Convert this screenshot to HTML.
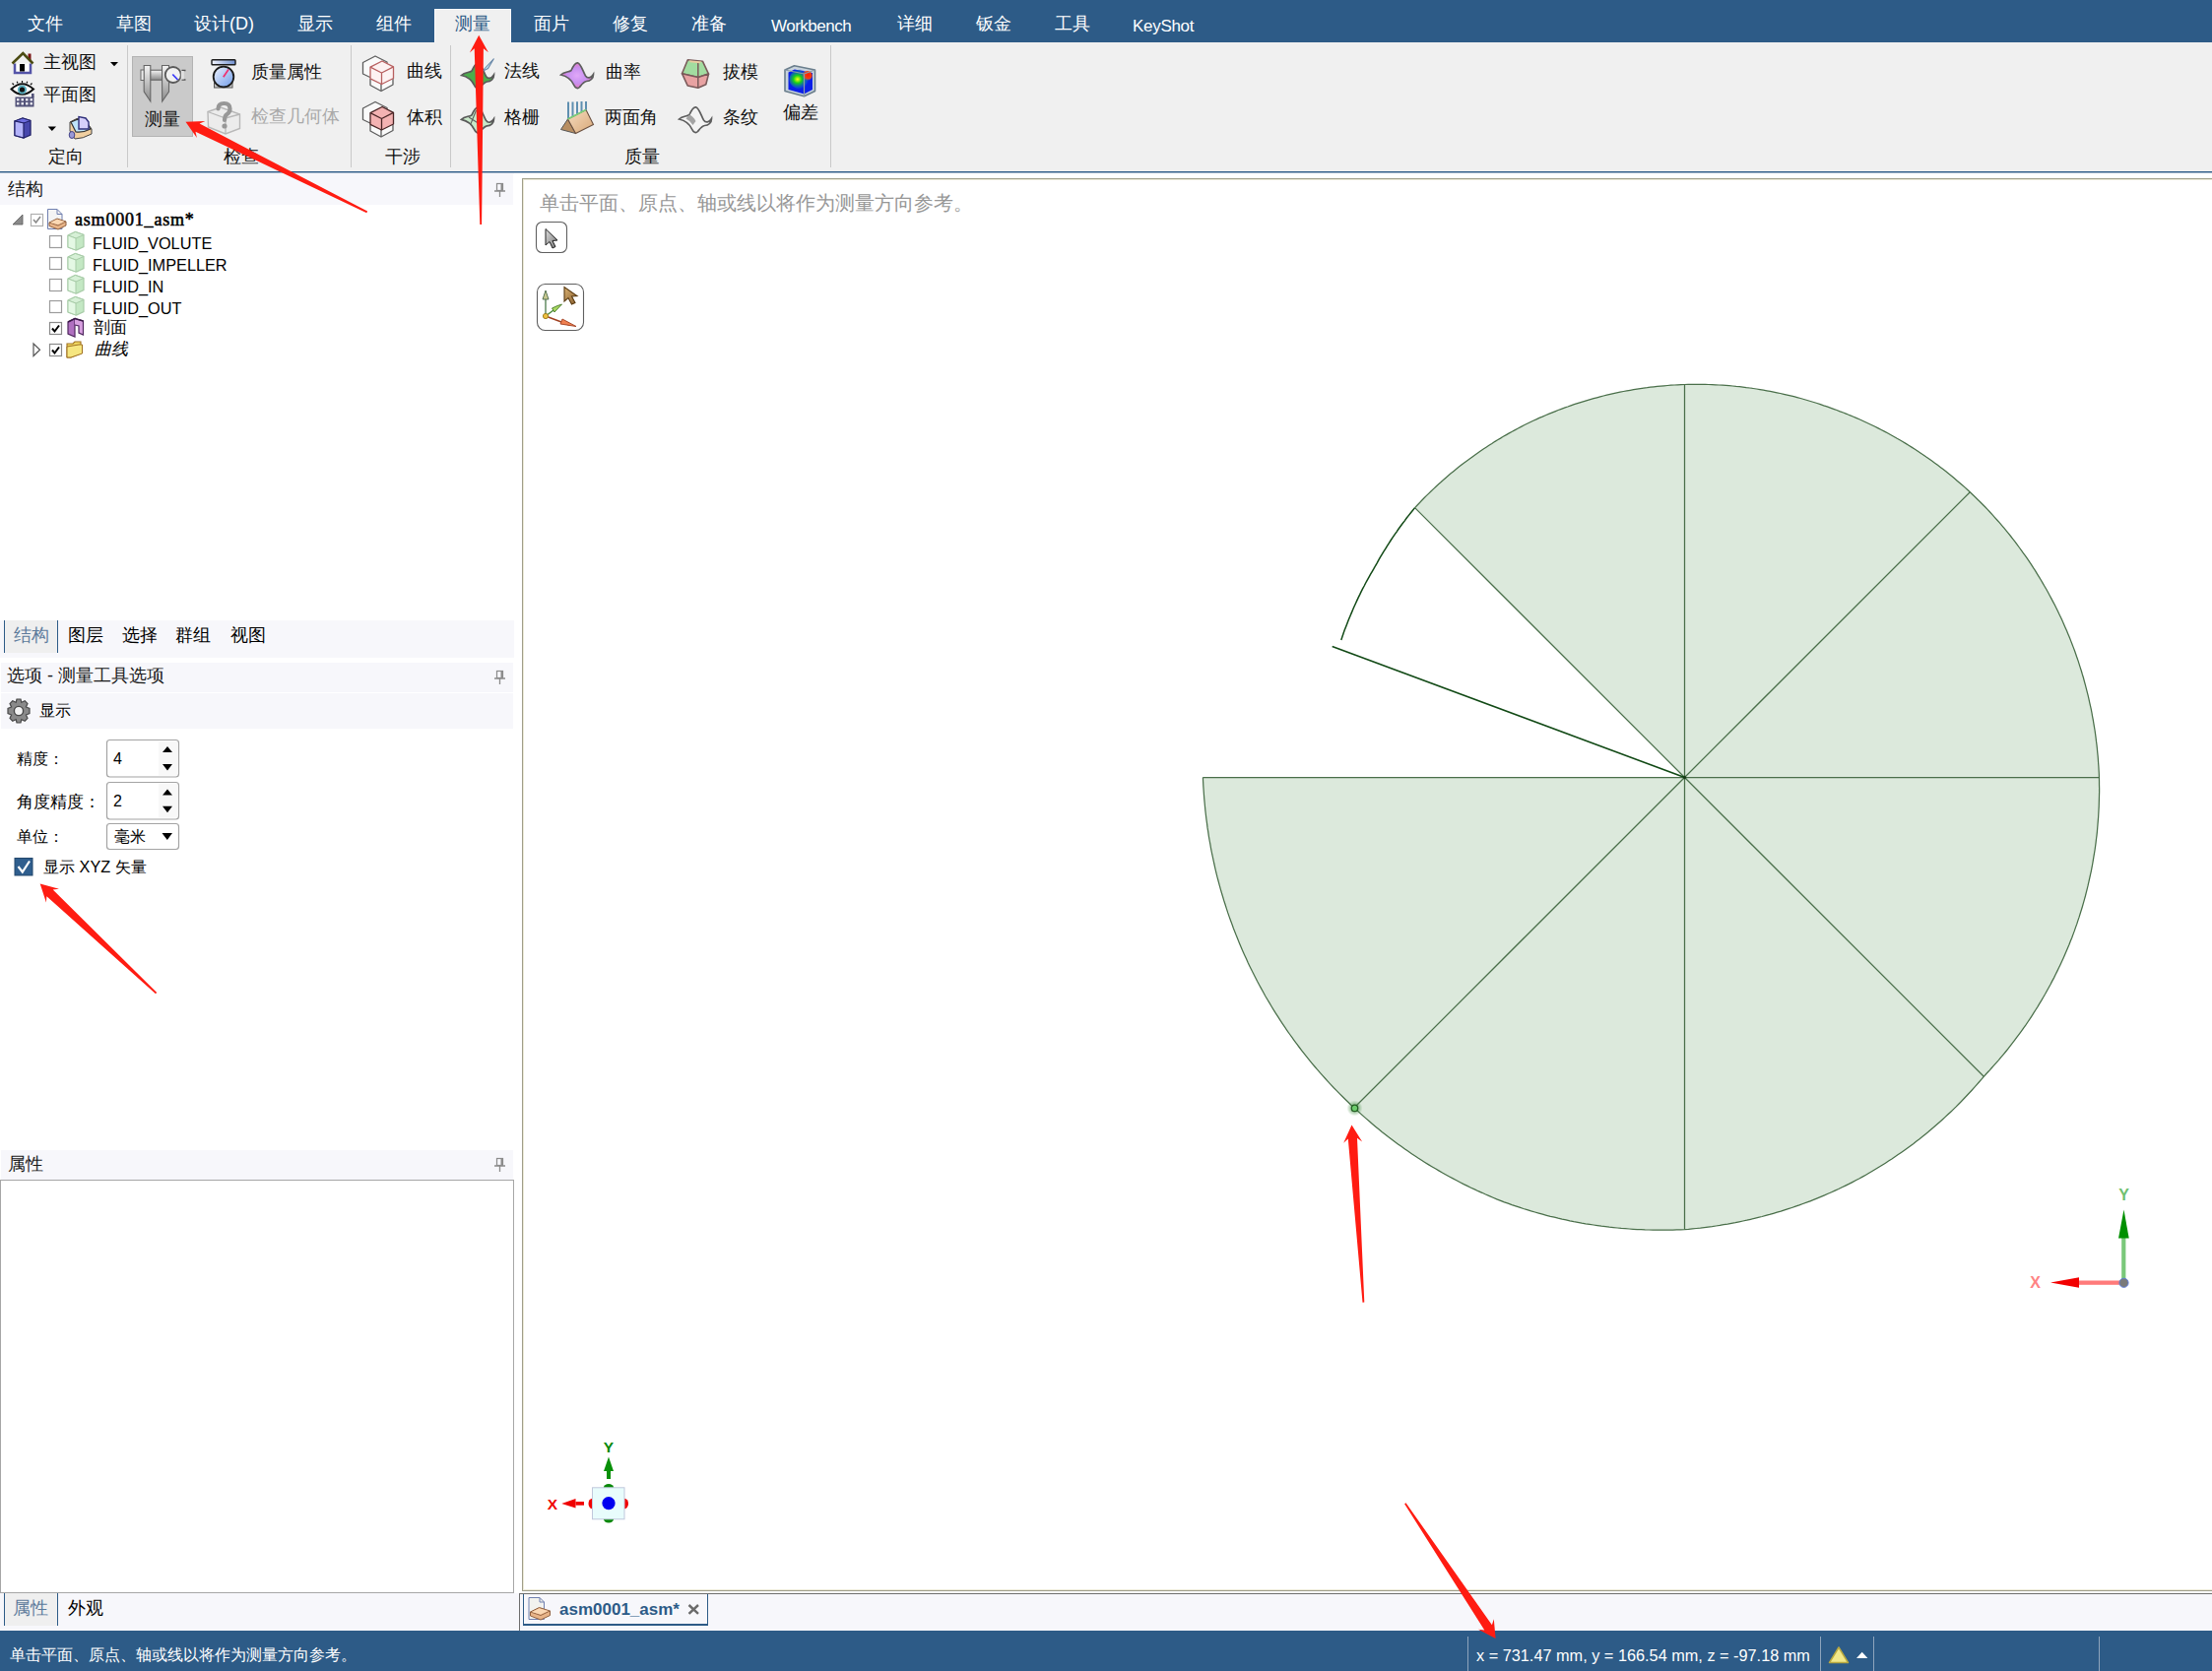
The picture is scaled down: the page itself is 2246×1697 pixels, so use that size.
<!DOCTYPE html>
<html><head><meta charset="utf-8">
<style>
html,body{margin:0;padding:0}
body{width:2246px;height:1697px;position:relative;overflow:hidden;background:#ffffff;font-family:"Liberation Sans",sans-serif;color:#000}
.a{position:absolute}
.t{position:absolute;white-space:nowrap;line-height:1}
.mt{position:absolute;white-space:nowrap;line-height:1;color:#fff;font-size:18px;top:15px}
.rt{position:absolute;white-space:nowrap;line-height:1;font-size:18px;color:#111}
.sep{position:absolute;width:1px;background:#c9c9c9;top:46px;height:124px}
svg{position:absolute;overflow:visible}
</style></head><body>

<!-- ===== MENU BAR ===== -->
<div class="a" style="left:0;top:0;width:2246px;height:43px;background:#2d5b87"></div>
<div class="a" style="left:441px;top:9px;width:76px;height:34px;background:#f0f0f0;border:1px solid #fafafa;border-bottom:0"></div>
<div class="mt" style="left:28px">文件</div>
<div class="mt" style="left:118px">草图</div>
<div class="mt" style="left:197px">设计(D)</div>
<div class="mt" style="left:302px">显示</div>
<div class="mt" style="left:382px">组件</div>
<div class="mt" style="left:462px;color:#2d5b87">测量</div>
<div class="mt" style="left:542px">面片</div>
<div class="mt" style="left:622px">修复</div>
<div class="mt" style="left:702px">准备</div>
<div class="mt" style="left:783px;font-size:17px;top:17.5px;letter-spacing:-0.5px">Workbench</div>
<div class="mt" style="left:911px">详细</div>
<div class="mt" style="left:991px">钣金</div>
<div class="mt" style="left:1071px">工具</div>
<div class="mt" style="left:1150px;font-size:17px;top:17.5px;letter-spacing:-0.3px">KeyShot</div>

<!-- ===== RIBBON ===== -->
<div class="a" style="left:0;top:43px;width:2246px;height:131px;background:#f0f0f0"></div>
<div class="a" style="left:0;top:174px;width:2246px;height:1px;background:#2d5b87"></div><div class="a" style="left:0;top:175px;width:2246px;height:1px;background:#9fb4c8"></div>
<div class="sep" style="left:129px"></div>
<div class="sep" style="left:356px"></div>
<div class="sep" style="left:457px"></div>
<div class="sep" style="left:843px"></div>


<!-- ribbon texts -->
<div class="rt" style="left:44px;top:54px">主视图</div>
<div class="rt" style="left:44px;top:87px">平面图</div>
<div class="rt" style="left:49px;top:150px">定向</div>
<div class="a" style="left:134px;top:57px;width:60px;height:80px;background:#cacaca;border:1px solid #b3b3b3"></div>
<div class="rt" style="left:147px;top:112px">测量</div>
<div class="rt" style="left:255px;top:64px">质量属性</div>
<div class="rt" style="left:255px;top:109px;color:#a9a9a9">检查几何体</div>
<div class="rt" style="left:227px;top:150px">检查</div>
<div class="rt" style="left:413px;top:63px">曲线</div>
<div class="rt" style="left:413px;top:110px">体积</div>
<div class="rt" style="left:391px;top:150px">干涉</div>
<div class="rt" style="left:512px;top:63px">法线</div>
<div class="rt" style="left:512px;top:110px">格栅</div>
<div class="rt" style="left:615px;top:64px">曲率</div>
<div class="rt" style="left:614px;top:110px">两面角</div>
<div class="rt" style="left:734px;top:64px">拔模</div>
<div class="rt" style="left:734px;top:110px">条纹</div>
<div class="rt" style="left:795px;top:105px">偏差</div>
<div class="rt" style="left:634px;top:150px">质量</div>

<svg style="left:0;top:0" width="2246" height="176" viewBox="0 0 2246 176">
<defs>
<linearGradient id="gCal" x1="0" y1="0" x2="0" y2="1"><stop offset="0" stop-color="#f4f4f4"/><stop offset="1" stop-color="#8a8a8a"/></linearGradient>
<linearGradient id="gBlue" x1="0" y1="0" x2="1" y2="1"><stop offset="0" stop-color="#f0f4ff"/><stop offset="1" stop-color="#6f9be8"/></linearGradient>
<linearGradient id="gBar" x1="0" y1="0" x2="1" y2="0"><stop offset="0" stop-color="#f4f6ff"/><stop offset="1" stop-color="#7090d0"/></linearGradient>
<linearGradient id="gTan" x1="0" y1="0" x2="1" y2="1"><stop offset="0" stop-color="#f6dcc0"/><stop offset="1" stop-color="#d8a878"/></linearGradient>
<radialGradient id="gCurv" cx="0.5" cy="0.5" r="0.6"><stop offset="0" stop-color="#e0a8f8"/><stop offset="0.5" stop-color="#c890f0"/><stop offset="1" stop-color="#f070a8"/></radialGradient>
<radialGradient id="gDev2" cx="0.38" cy="0.5" r="0.55"><stop offset="0" stop-color="#ffff10"/><stop offset="0.35" stop-color="#18d018"/><stop offset="0.8" stop-color="#1060d0" stop-opacity="0.6"/><stop offset="1" stop-color="#0a1ee8" stop-opacity="0"/></radialGradient><radialGradient id="gRed" cx="0.6" cy="0.4" r="0.6"><stop offset="0" stop-color="#ff1a00"/><stop offset="0.6" stop-color="#f04010"/><stop offset="1" stop-color="#e08020" stop-opacity="0"/></radialGradient><radialGradient id="gDev" cx="0.45" cy="0.5" r="0.6"><stop offset="0" stop-color="#ffff20"/><stop offset="0.35" stop-color="#20d020"/><stop offset="0.75" stop-color="#1040e0"/><stop offset="1" stop-color="#0010d0"/></radialGradient>
</defs>
<!-- house -->
<path d="M15 64.5 V74 H31 V64.5" fill="#ffffff" stroke="#5454a8" stroke-width="2.5"/>
<rect x="20" y="65" width="5" height="7.5" fill="#000"/>
<rect x="28.5" y="54.5" width="3" height="6.5" fill="#7a1414"/>
<path d="M12.5 64.5 L23.3 54 L33.5 64.5" fill="none" stroke="#4b4b12" stroke-width="2.6"/>
<!-- eye + grid -->
<path d="M11.5 90.5 Q22.5 80 34 90.5 Q22.5 101 11.5 90.5 Z" fill="#fff" stroke="#111" stroke-width="2"/>
<circle cx="22.5" cy="91" r="3.6" fill="#111" stroke="#5ab0c0" stroke-width="2"/>
<path d="M14 86 l-1.5 -1.5 M18 84.5 l-0.8 -1.8 M22.5 84 v-2 M27 84.5 l0.8 -1.8 M31 86 l1.5 -1.5" stroke="#111" stroke-width="1.2"/>
<rect x="15.5" y="98.5" width="19" height="10" fill="#525278"/>
<rect x="32" y="95" width="2.6" height="4" fill="#525278"/>
<g fill="#e6e6ee"><rect x="17" y="100" width="2.5" height="2.5"/><rect x="21.5" y="100" width="2.5" height="2.5"/><rect x="26" y="100" width="2.5" height="2.5"/><rect x="30.5" y="100" width="2.5" height="2.5"/><rect x="17" y="104" width="2.5" height="2.5"/><rect x="21.5" y="104" width="2.5" height="2.5"/><rect x="26" y="104" width="2.5" height="2.5"/><rect x="30.5" y="104" width="2.5" height="2.5"/></g>
<!-- cube -->
<path d="M15 123 L23 120 L31 122.5 L31 137 L24 140 L15 137.5 Z" fill="#4747ad" stroke="#22226a" stroke-width="1.3"/>
<path d="M15 123 L23 120 L31 122.5 L24 125 Z" fill="#6e6ee0" stroke="#22226a" stroke-width="1"/>
<path d="M15 123 L24 125 L24 140 L15 137.5 Z" fill="#b3b3fa" stroke="#22226a" stroke-width="1.2"/>
<!-- dropdown arrows -->
<path d="M112 63 H120 L116 67.3 Z" fill="#000"/>
<path d="M48.7 128.5 H57 L52.8 133 Z" fill="#000"/>
<!-- orient icon -->
<path d="M71 124 Q78 119 85 120 L93 131 L93 136 Q84 141 76 141 L71 133 Z" fill="#f0cfa0" stroke="#444" stroke-width="1"/>
<path d="M72 124 Q79 120 85 121 L92 131 Q84 135 77 134 Z" fill="#bfe4fa" stroke="#333" stroke-width="1.2"/>
<path d="M80 118.5 L80 131 L90 131 L90 124 L87 120 Z" fill="#d6d0fa" stroke="#30307a" stroke-width="1.4"/>
<ellipse cx="73" cy="137" rx="2.8" ry="3.5" fill="#9a9ad8" stroke="#444488" stroke-width="1"/>
<!-- caliper -->
<rect x="143" y="71" width="3.5" height="10.5" fill="#ececec" stroke="#666" stroke-width="1"/>
<rect x="152.5" y="71.2" width="12.5" height="10" fill="url(#gCal)" stroke="#666" stroke-width="1.1"/>
<path d="M146.2 66.5 H152.8 V103 L146.2 93 Z" fill="url(#gCal)" stroke="#666" stroke-width="1.1"/>
<path d="M164.5 66.5 H171.5 V93 L164.7 103 Z" fill="url(#gCal)" stroke="#666" stroke-width="1.1"/>
<circle cx="175.8" cy="76" r="8" fill="#f1f1f1" stroke="#5a5a5a" stroke-width="1.8"/>
<path d="M175.3 75.5 L180.5 81" stroke="#3a3af8" stroke-width="1.8"/>
<path d="M184.5 71.5 H188.5 M184.5 81 H188.5" stroke="#555" stroke-width="1.3"/>
<rect x="183.8" y="72" width="3" height="8.5" fill="#e0e0e0"/>
<!-- scale -->
<rect x="215" y="60.7" width="24" height="5" rx="0.8" fill="url(#gBar)" stroke="#1c1c1c" stroke-width="1.4"/>
<rect x="217.5" y="84" width="18.5" height="5" fill="#c8c8c8" stroke="#555" stroke-width="1"/>
<circle cx="227" cy="78" r="10.3" fill="url(#gBlue)" stroke="#1a1a1a" stroke-width="1.8"/>
<path d="M226.8 78.2 L232 70.5" stroke="#f03070" stroke-width="1.7"/>
<!-- check geometry (disabled) -->
<path d="M211 113.5 L224 109 L243.5 116 V130.5 L229 136 L211.5 129 Z" fill="#ececec" stroke="#b8b8b8" stroke-width="1.4"/>
<path d="M211 113.5 L229 120 L243.5 116 M229 120 V136" fill="none" stroke="#b8b8b8" stroke-width="1.3"/>
<path d="M221.5 110.5 Q221.5 105 227.5 105 Q233.5 105 233.5 110.5 Q233.5 114 230.5 116 Q228 117.5 228 122" fill="none" stroke="#979797" stroke-width="4.2" stroke-linecap="round"/>
<circle cx="228" cy="128" r="2.6" fill="#979797"/>
<!-- interference: curves -->
<g stroke-width="1.3" stroke-linejoin="round">
<path d="M368.5 63.5 L381 57 L393 63 L393 75 L381 81 L368.5 75 Z" fill="#fafafa" stroke="#5e5e5e"/>
<path d="M376 80 V86.5 L387 92.5 L399 86 V80" fill="#fafafa" stroke="#5e5e5e"/>
<path d="M387 80.5 V92" stroke="#5e5e5e"/>
<path d="M376 68.2 L388 62 L399.5 67.8 L399.5 79.5 L387.5 85.5 L376 79.8 Z" fill="#fdf2f2" stroke="#b86060"/>
<path d="M376 68.2 L387.5 74 L399.5 67.8 M387.5 74 V85.5" fill="none" stroke="#b86060"/>
</g>
<!-- interference: volume -->
<g stroke-width="1.3" stroke-linejoin="round">
<path d="M368.5 110 L381 103.5 L393 109.5 L393 121.5 L381 127.5 L368.5 121.5 Z" fill="#fafafa" stroke="#5e5e5e"/>
<path d="M376 126.5 V133 L387 139 L399 132.5 V126.5" fill="#fafafa" stroke="#5e5e5e"/>
<path d="M387 127 V138.5" stroke="#5e5e5e"/>
<path d="M376 114.7 L388 108.5 L399.5 114.3 L399.5 126 L387.5 132 L376 126.3 Z" fill="#f4b2b2" stroke="#4a2626"/>
<path d="M376 114.7 L387.5 120.5 L399.5 114.3 M387.5 120.5 V132" fill="none" stroke="#4a2626"/>
</g>
<!-- normal -->
<defs><path id="wave" d="M569.5 76 C573 72.5 577.5 73.5 580 71.5 C582 67 584 63.5 586.5 63.8 C590 64.5 592 73 594.5 77 C596.5 80 600 79.5 602.5 75.5 C602.5 79.5 599.5 82.5 595.5 82.5 C592.5 83 590.5 86 588.5 88.5 C586.5 90.5 584 89.5 582.5 86 C580 80.5 576 77.5 569.5 76 Z"/></defs>
<use href="#wave" x="-101" y="0.5" fill="#4cac4c" stroke="#5a5a5a" stroke-width="1.7"/>
<path d="M489.5 72.5 L501.5 59.5 L495.5 69.5 Z" fill="#c4ecf8" stroke="#6a88a8" stroke-width="1.1"/>
<!-- grid -->
<use href="#wave" x="-101" y="45.3" fill="#c8e8c8" stroke="#5a5a5a" stroke-width="1.7"/>
<path d="M476 119 L490 128 M483.5 112 L477.5 127" stroke="#606060" stroke-width="1.1"/>
<!-- curvature -->
<use href="#wave" x="0" y="0" fill="url(#gCurv)" stroke="#5e5e5e" stroke-width="1.7"/>
<!-- dihedral -->
<path d="M569.5 131.5 L576.5 121 L584.5 135.5 Z" fill="#b88e62" stroke="#555" stroke-width="1"/>
<path d="M576.5 121 L595 111.5 L602.5 126.5 L584.5 135.5 Z" fill="url(#gTan)" stroke="#6a5040" stroke-width="1.1"/>
<path d="M577 103.5 V120 M581.5 103.5 V118 M586 103.2 V116 M590.5 103 V113.5 M595 103 V111.5" stroke="#5f8fb0" stroke-width="2"/>
<path d="M576.5 121 L595 111.5" stroke="#7ad07a" stroke-width="1.6"/>
<!-- draft -->
<path d="M692.5 74.7 L698.3 60.7 L713.4 62.2 L719.5 75.1 L708.8 78.5 Z" fill="#a2dca0" stroke="#7a5a5a" stroke-width="1.6" stroke-linejoin="round"/>
<path d="M692.5 74.7 L708.8 78.5 L719.5 75.1 L716.8 85.8 L708.8 89.3 L698.2 87 Z" fill="#e8a2a2" stroke="#7a5a5a" stroke-width="1.6" stroke-linejoin="round"/>
<path d="M708.8 63 V89" stroke="#7a5a5a" stroke-width="1.5"/>
<path d="M699.5 61.2 L712.5 62.6 L710.5 64.2 L700.8 63.2 Z" fill="#eccaa0"/>
<!-- stripes -->
<use href="#wave" x="120" y="45" fill="#f4f4f4" stroke="#5e5e5e" stroke-width="1.7"/>
<path d="M700 116.5 Q704 118 706.5 123 L703.5 127 Q700 122 696.5 120.5 Z" fill="#a4a4a4"/>
<!-- deviation -->
<path d="M797 71 L806.5 66.7 L827.5 71 L827.5 92.5 L816.5 97.8 L797 92.5 Z" fill="#c9d4dc" stroke="#6a7e8c" stroke-width="1.6" stroke-linejoin="round"/>
<path d="M800.5 73.5 L806.8 70.5 L825 74 V91 L816.5 95.5 L800.5 91 Z" fill="#0a1ee8"/>
<ellipse cx="812.5" cy="80.5" rx="11" ry="10" fill="url(#gDev2)"/>
<ellipse cx="819.5" cy="77" rx="5.2" ry="5" fill="url(#gRed)"/>
<path d="M797 71 L816.5 75 L827.5 71 M816.5 75 V97.8" fill="none" stroke="#8a9aa8" stroke-width="1.2"/>
</svg>


<!-- ===== LEFT PANEL ===== -->
<div class="a" style="left:0;top:176px;width:522px;height:1px;background:#f7f7fb"></div>
<div class="a" style="left:0;top:176px;width:521px;height:32px;background:#f7f7fb"></div>
<div class="t" style="left:8px;top:183px;font-size:18px;color:#1a1a1a">结构</div>

<div class="t" style="left:94px;top:238.5px;font-size:16.3px">FLUID_VOLUTE</div>
<div class="t" style="left:94px;top:260.5px;font-size:16.3px">FLUID_IMPELLER</div>
<div class="t" style="left:94px;top:282.5px;font-size:16.3px">FLUID_IN</div>
<div class="t" style="left:94px;top:304.5px;font-size:16.3px">FLUID_OUT</div>
<div class="t" style="left:95px;top:324px;font-size:17px">剖面</div>
<div class="t" style="left:96px;top:346px;font-size:17px;font-style:italic">曲线</div>
<div class="t" style="left:76px;top:213.5px;font-size:18px;font-family:'Liberation Serif',serif;letter-spacing:0.8px;-webkit-text-stroke:0.55px #000">asm0001_asm*</div>

<!-- panel tabs -->
<div class="a" style="left:0;top:630px;width:522px;height:38px;background:#f7f7fb"></div>
<div class="a" style="left:4px;top:630px;width:53px;height:33px;background:#efefef;border-left:1.5px solid #2d5b87;border-right:1.5px solid #2d5b87"></div>
<div class="t" style="left:14px;top:636px;font-size:18px;color:#5d7b9c">结构</div>
<div class="t" style="left:69px;top:636px;font-size:18px">图层</div>
<div class="t" style="left:124px;top:636px;font-size:18px">选择</div>
<div class="t" style="left:178px;top:636px;font-size:18px">群组</div>
<div class="t" style="left:234px;top:636px;font-size:18px">视图</div>

<!-- options -->
<div class="a" style="left:1px;top:673px;width:520px;height:30px;background:#f7f7fb"></div>
<div class="a" style="left:1px;top:704px;width:520px;height:36px;background:#f7f7fb"></div>
<div class="t" style="left:7px;top:677px;font-size:18px;color:#1a1a1a">选项 - 测量工具选项</div>
<div class="t" style="left:40px;top:714px;font-size:16px">显示</div>
<div class="t" style="left:17px;top:763px;font-size:16px">精度：</div>
<div class="t" style="left:17px;top:806px;font-size:16.5px">角度精度：</div>
<div class="t" style="left:17px;top:842px;font-size:16px">单位：</div>
<div class="t" style="left:44px;top:872px;font-size:16.3px">显示 XYZ 矢量</div>

<!-- properties -->
<div class="a" style="left:1px;top:1168px;width:520px;height:30px;background:#f7f7fb"></div>
<div class="t" style="left:8px;top:1173px;font-size:18px;color:#1a1a1a">属性</div>
<div class="a" style="left:0;top:1198px;width:520px;height:418px;border:1px solid #a6a6a6;background:#fff"></div>
<div class="a" style="left:0;top:1618px;width:522px;height:38px;background:#f7f7fb"></div>
<div class="a" style="left:4px;top:1618px;width:53px;height:33px;background:#efefef;border-left:1.5px solid #2d5b87;border-right:1.5px solid #2d5b87"></div>
<div class="t" style="left:13px;top:1624px;font-size:18px;color:#5d7b9c">属性</div>
<div class="t" style="left:69px;top:1624px;font-size:18px">外观</div>
<svg style="left:0;top:0" width="530" height="1697" viewBox="0 0 530 1697">
<defs>
<g id="pin"><rect x="504.5" y="0.5" width="6" height="7" fill="none" stroke="#8c8c8c" stroke-width="1.2"/><rect x="508.5" y="0.5" width="2" height="7" fill="#8c8c8c"/><path d="M502 8 H513 M507.5 8 V14" stroke="#8c8c8c" stroke-width="1.3"/></g>
<g id="cube"><path d="M0.5 4 L8 0.5 L16.5 3.5 V15.5 L9 19 L0.5 16 Z" fill="#c4e8c4" stroke="#a8cca8" stroke-width="1.2"/><path d="M0.5 4 L8.5 7 L16.5 3.5 L8 0.5 Z" fill="#d6f0d6" stroke="#a8cca8" stroke-width="1"/><path d="M0.5 4 L8.5 7 V19 L0.5 16 Z" fill="#e4f8e4" stroke="#a8cca8" stroke-width="1"/></g>
<g id="cbx"><rect x="0.5" y="0.5" width="12" height="12" fill="#fff" stroke="#9c9c9c" stroke-width="1.2"/></g>
<g id="cbk"><rect x="0.5" y="0.5" width="12" height="12" fill="#fff" stroke="#8a8a8a" stroke-width="1.2"/><path d="M3 6.5 L5.5 9.5 L10 3.5" fill="none" stroke="#000" stroke-width="2"/></g>
</defs>
<use href="#pin" x="0" y="186"/>
<use href="#pin" x="0" y="681"/>
<use href="#pin" x="0" y="1176"/>
<!-- root row -->
<path d="M13 228 L23 218 V228 Z" fill="#8a8a8a" stroke="#5a5a5a" stroke-width="0.8"/>
<rect x="31.5" y="217.5" width="12" height="12" fill="#fff" stroke="#b0b0b0" stroke-width="1.2"/>
<path d="M34 223 L36.5 226 L41 220" fill="none" stroke="#8a8a8a" stroke-width="1.6"/>
<path d="M48.5 212.5 H58 L63 217.5 V232.5 H48.5 Z" fill="#f4f4f4" stroke="#7080b0" stroke-width="1"/>
<path d="M58 212.5 V217.5 H63" fill="none" stroke="#7080b0" stroke-width="1"/>
<path d="M50 226 L58 222 L67 225 L67 229 L59 233 L50 229.5 Z" fill="#e8b488" stroke="#906040" stroke-width="1"/>
<path d="M50 226 L59 229 L67 225" fill="none" stroke="#906040" stroke-width="0.9"/>
<path d="M51 226 L58 222.8 L65.5 225 L59 228 Z" fill="#fad8b4"/>
<!-- children -->
<use href="#cbx" x="50" y="239"/><use href="#cube" x="68.5" y="235"/>
<use href="#cbx" x="50" y="261"/><use href="#cube" x="68.5" y="257"/>
<use href="#cbx" x="50" y="283"/><use href="#cube" x="68.5" y="279"/>
<use href="#cbx" x="50" y="305"/><use href="#cube" x="68.5" y="301"/>
<use href="#cbk" x="50" y="327"/>
<path d="M69 327 L76 323.5 L76 342 L69 339 Z" fill="#b070c0" stroke="#502860" stroke-width="1.2"/>
<path d="M76 323.5 L84.5 326 V340 L80 338 V331 L76 330" fill="#d8a0e0" stroke="#502860" stroke-width="1.2"/>
<path d="M69 327 L76 323.5 L84.5 326" fill="none" stroke="#3a1848" stroke-width="1.6"/>
<path d="M34 349 L40.5 355.3 L34 361.5 Z" fill="#fff" stroke="#555" stroke-width="1.2"/>
<use href="#cbk" x="50" y="349"/>
<path d="M68 349 H74 L76 347 H82 V359 L72 363 H68 Z" fill="#f0d860" stroke="#a07020" stroke-width="1.1"/>
<path d="M68 352 L80 350 L83.5 350 V359 L72 363 H68 Z" fill="#f6e680" stroke="#a07020" stroke-width="1"/>
<!-- gear -->
<g transform="translate(19,722)">
<path d="M-2 -12 H2 L2.8 -8.6 L6.2 -10.2 L9 -7.4 L7.4 -4 L11 -2.6 V2.6 L7.4 4 L9 7.4 L6.2 10.2 L2.8 8.6 L2 12 H-2 L-2.8 8.6 L-6.2 10.2 L-9 7.4 L-7.4 4 L-11 2.6 V-2.6 L-7.4 -4 L-9 -7.4 L-6.2 -10.2 L-2.8 -8.6 Z" fill="#8a8a8a" stroke="#4a4a4a" stroke-width="1.2"/>
<circle r="4.6" fill="#f4f4f4" stroke="#4a4a4a" stroke-width="1.4"/>
</g>
<!-- spinners -->
<rect x="108.5" y="751.5" width="73" height="37.5" rx="3" fill="#fff" stroke="#a4a4a4" stroke-width="1.2"/>
<rect x="161" y="753" width="19" height="34.5" fill="#f8f8f8"/>
<path d="M165 764 L170 758 L175 764 Z M165 776 L175 776 L170 782.5 Z" fill="#000"/>
<rect x="108.5" y="794.5" width="73" height="37.5" rx="3" fill="#fff" stroke="#a4a4a4" stroke-width="1.2"/>
<rect x="161" y="796" width="19" height="34.5" fill="#f8f8f8"/>
<path d="M165 807.5 L170 801.5 L175 807.5 Z M165 818.8 L175 818.8 L170 825.3 Z" fill="#000"/>
<rect x="108.5" y="836.5" width="73" height="26" rx="3" fill="#fff" stroke="#a4a4a4" stroke-width="1.2"/>
<path d="M164.5 846 L175 846 L169.8 853 Z" fill="#000"/>
<!-- checkbox checked -->
<rect x="15" y="871.5" width="18" height="17.5" fill="#2f5e8e" stroke="#24486c" stroke-width="1"/>
<path d="M18.5 880 L22.8 885.5 L30 874.5" fill="none" stroke="#fff" stroke-width="2.2"/>
</svg>
<div class="t" style="left:115px;top:763px;font-size:16px">4</div>
<div class="t" style="left:115px;top:806px;font-size:16px">2</div>
<div class="t" style="left:116px;top:842px;font-size:16px">毫米</div>



<!-- ===== VIEWPORT ===== -->
<div class="a" style="left:530px;top:181px;width:1716px;height:1433px;border-left:1px solid #a09e8a;border-top:1px solid #a09e8a;border-bottom:1px solid #a09e8a;box-shadow:inset 1px 1px 0 #ecead8, inset 0 -1px 0 #ecead8;background:#fff"></div>
<div class="t" style="left:548px;top:196px;font-size:20px;font-family:'Liberation Serif',serif;color:#979797">单击平面、原点、轴或线以将作为测量方向参考。</div>
<svg style="left:0;top:0" width="2246" height="1697" viewBox="0 0 2246 1697">
<defs><radialGradient id="glow"><stop offset="0" stop-color="#2a8a2a" stop-opacity="0.9"/><stop offset="0.5" stop-color="#3a8a3a" stop-opacity="0.45"/><stop offset="1" stop-color="#3a8a3a" stop-opacity="0"/></radialGradient></defs>
<path d="M1710.5 789.5 L1221.4 789.5 L1221.6 793.8 L1221.8 798.0 L1222.1 802.3 L1222.4 806.5 L1222.7 810.8 L1223.1 815.0 L1223.5 819.3 L1223.9 823.5 L1224.4 827.8 L1224.9 832.0 L1225.5 836.2 L1226.0 840.4 L1226.7 844.6 L1227.3 848.8 L1228.0 853.0 L1228.8 857.2 L1229.5 861.4 L1230.3 865.5 L1231.2 869.7 L1232.1 873.9 L1233.0 878.0 L1233.9 882.1 L1234.9 886.3 L1235.9 890.4 L1237.0 894.5 L1238.1 898.6 L1239.2 902.6 L1240.4 906.7 L1241.6 910.8 L1242.8 914.8 L1244.1 918.8 L1245.4 922.9 L1246.7 926.9 L1248.1 930.9 L1249.5 934.8 L1251.0 938.8 L1252.4 942.8 L1254.0 946.7 L1255.5 950.6 L1257.1 954.5 L1258.7 958.4 L1260.3 962.3 L1262.0 966.2 L1263.7 970.0 L1265.5 973.8 L1267.2 977.7 L1269.0 981.4 L1270.9 985.2 L1272.8 989.0 L1274.7 992.7 L1276.6 996.5 L1278.6 1000.2 L1280.6 1003.9 L1282.6 1007.5 L1284.6 1011.2 L1286.7 1014.8 L1288.9 1018.4 L1291.0 1022.0 L1293.2 1025.6 L1295.4 1029.2 L1297.7 1032.7 L1299.9 1036.2 L1302.2 1039.7 L1304.6 1043.2 L1306.9 1046.6 L1309.3 1050.0 L1311.8 1053.4 L1314.2 1056.8 L1316.7 1060.2 L1319.2 1063.5 L1321.7 1066.8 L1324.3 1070.1 L1326.9 1073.4 L1329.5 1076.6 L1332.1 1079.8 L1334.8 1083.0 L1337.5 1086.2 L1340.3 1089.3 L1343.0 1092.4 L1345.8 1095.5 L1348.6 1098.6 L1351.4 1101.6 L1354.3 1104.7 L1357.2 1107.6 L1360.1 1110.6 L1363.0 1113.5 L1366.0 1116.5 L1368.9 1119.3 L1371.9 1122.2 L1375.0 1125.0 L1378.0 1127.8 L1381.1 1130.6 L1384.2 1133.4 L1387.3 1136.1 L1390.4 1138.8 L1393.5 1141.5 L1396.7 1144.2 L1399.9 1146.8 L1403.1 1149.4 L1406.4 1151.9 L1409.6 1154.5 L1412.9 1157.0 L1416.2 1159.5 L1419.5 1161.9 L1422.9 1164.3 L1426.2 1166.7 L1429.6 1169.1 L1433.0 1171.4 L1436.5 1173.7 L1439.9 1176.0 L1443.4 1178.2 L1446.8 1180.4 L1450.3 1182.6 L1453.8 1184.7 L1457.4 1186.8 L1460.9 1188.9 L1464.5 1191.0 L1468.1 1193.0 L1471.7 1195.0 L1475.3 1196.9 L1478.9 1198.8 L1482.6 1200.7 L1486.2 1202.6 L1489.9 1204.4 L1493.6 1206.2 L1497.3 1207.9 L1501.0 1209.7 L1504.8 1211.3 L1508.5 1213.0 L1512.3 1214.6 L1516.0 1216.2 L1519.8 1217.8 L1523.6 1219.3 L1527.4 1220.8 L1531.3 1222.2 L1535.1 1223.6 L1539.0 1224.9 L1542.9 1226.2 L1546.8 1227.5 L1550.7 1228.7 L1554.6 1229.9 L1558.5 1231.0 L1562.4 1232.1 L1566.3 1233.2 L1570.3 1234.3 L1574.2 1235.3 L1578.2 1236.2 L1582.1 1237.2 L1586.1 1238.1 L1590.1 1238.9 L1594.0 1239.8 L1598.0 1240.6 L1602.0 1241.3 L1606.0 1242.1 L1610.0 1242.8 L1614.0 1243.4 L1618.0 1244.0 L1622.0 1244.6 L1626.0 1245.2 L1630.1 1245.7 L1634.1 1246.2 L1638.1 1246.6 L1642.1 1247.0 L1646.1 1247.4 L1650.2 1247.7 L1654.2 1248.0 L1658.2 1248.3 L1662.3 1248.6 L1666.3 1248.7 L1670.3 1248.9 L1674.3 1249.0 L1678.4 1249.1 L1682.4 1249.2 L1686.4 1249.2 L1690.4 1249.2 L1694.4 1249.1 L1698.5 1249.1 L1702.5 1248.9 L1706.5 1248.8 L1710.5 1248.6 L1714.5 1248.3 L1718.5 1247.9 L1722.5 1247.5 L1726.5 1247.1 L1730.5 1246.6 L1734.4 1246.1 L1738.4 1245.6 L1742.4 1245.0 L1746.3 1244.4 L1750.2 1243.7 L1754.2 1243.1 L1758.1 1242.3 L1762.0 1241.6 L1765.9 1240.8 L1769.8 1240.0 L1773.7 1239.2 L1777.6 1238.3 L1781.4 1237.4 L1785.3 1236.4 L1789.1 1235.5 L1793.0 1234.4 L1796.8 1233.4 L1800.6 1232.3 L1804.4 1231.2 L1808.2 1230.1 L1811.9 1228.9 L1815.7 1227.7 L1819.4 1226.5 L1823.2 1225.2 L1826.9 1223.9 L1830.6 1222.5 L1834.3 1221.2 L1838.0 1219.8 L1841.6 1218.4 L1845.3 1216.9 L1848.9 1215.4 L1852.5 1213.9 L1856.1 1212.3 L1859.7 1210.7 L1863.2 1209.1 L1866.8 1207.5 L1870.3 1205.8 L1873.8 1204.1 L1877.3 1202.4 L1880.8 1200.6 L1884.2 1198.8 L1887.7 1197.0 L1891.1 1195.1 L1894.5 1193.2 L1897.8 1191.3 L1901.2 1189.3 L1904.5 1187.3 L1907.8 1185.3 L1911.1 1183.3 L1914.4 1181.2 L1917.6 1179.1 L1920.9 1177.0 L1924.1 1174.8 L1927.3 1172.6 L1930.4 1170.4 L1933.6 1168.2 L1936.7 1166.0 L1939.8 1163.7 L1942.9 1161.4 L1945.9 1159.0 L1949.0 1156.7 L1952.0 1154.3 L1954.9 1151.9 L1957.9 1149.5 L1960.8 1147.0 L1963.7 1144.5 L1966.6 1142.0 L1969.5 1139.5 L1972.3 1137.0 L1975.1 1134.4 L1977.9 1131.8 L1980.7 1129.2 L1983.4 1126.6 L1986.2 1123.9 L1988.8 1121.2 L1991.5 1118.5 L1994.1 1115.8 L1996.7 1113.0 L1999.3 1110.3 L2001.9 1107.5 L2004.4 1104.7 L2006.9 1101.9 L2009.4 1099.0 L2011.9 1096.2 L2014.3 1093.3 L2016.8 1090.5 L2019.4 1087.8 L2021.9 1085.0 L2024.4 1082.2 L2026.9 1079.4 L2029.4 1076.6 L2031.8 1073.7 L2034.2 1070.9 L2036.6 1068.0 L2038.9 1065.1 L2041.2 1062.1 L2043.5 1059.2 L2045.8 1056.2 L2048.0 1053.2 L2050.3 1050.2 L2052.5 1047.2 L2054.6 1044.1 L2056.8 1041.1 L2058.9 1038.0 L2061.0 1034.9 L2063.0 1031.8 L2065.0 1028.6 L2067.0 1025.5 L2069.0 1022.3 L2070.9 1019.1 L2072.9 1015.9 L2074.7 1012.7 L2076.6 1009.5 L2078.4 1006.2 L2080.2 1003.0 L2082.0 999.7 L2083.7 996.4 L2085.5 993.1 L2087.1 989.8 L2088.8 986.4 L2090.4 983.1 L2092.0 979.7 L2093.6 976.3 L2095.1 973.0 L2096.6 969.6 L2098.1 966.1 L2099.5 962.7 L2101.0 959.3 L2102.3 955.8 L2103.7 952.4 L2105.0 948.9 L2106.3 945.4 L2107.5 941.9 L2108.8 938.4 L2109.9 934.9 L2111.1 931.4 L2112.2 927.8 L2113.3 924.3 L2114.4 920.7 L2115.4 917.2 L2116.4 913.6 L2117.4 910.0 L2118.3 906.4 L2119.2 902.8 L2120.1 899.2 L2120.9 895.6 L2121.7 892.0 L2122.5 888.4 L2123.3 884.8 L2124.0 881.2 L2124.7 877.5 L2125.3 873.9 L2125.9 870.2 L2126.5 866.6 L2127.1 863.0 L2127.6 859.3 L2128.1 855.6 L2128.5 852.0 L2129.0 848.3 L2129.4 844.6 L2129.7 841.0 L2130.0 837.3 L2130.3 833.6 L2130.6 830.0 L2130.8 826.3 L2131.0 822.6 L2131.2 818.9 L2131.3 815.2 L2131.4 811.6 L2131.5 807.9 L2131.6 804.2 L2131.6 800.5 L2131.5 796.8 L2131.5 793.2 L2131.4 789.5 L2131.3 785.8 L2131.1 782.2 L2130.9 778.5 L2130.6 774.8 L2130.4 771.2 L2130.1 767.5 L2129.7 763.9 L2129.4 760.2 L2129.0 756.6 L2128.5 752.9 L2128.1 749.3 L2127.6 745.7 L2127.1 742.0 L2126.5 738.4 L2125.9 734.8 L2125.3 731.2 L2124.6 727.6 L2124.0 724.0 L2123.3 720.4 L2122.5 716.9 L2121.7 713.3 L2120.9 709.7 L2120.1 706.2 L2119.2 702.6 L2118.3 699.1 L2117.4 695.6 L2116.4 692.0 L2115.5 688.5 L2114.4 685.0 L2113.4 681.5 L2112.3 678.1 L2111.2 674.6 L2110.1 671.1 L2108.9 667.7 L2107.7 664.3 L2106.5 660.8 L2105.2 657.4 L2103.9 654.0 L2102.6 650.6 L2101.3 647.3 L2099.9 643.9 L2098.5 640.6 L2097.0 637.2 L2095.6 633.9 L2094.1 630.6 L2092.6 627.3 L2091.0 624.0 L2089.5 620.8 L2087.9 617.5 L2086.3 614.3 L2084.6 611.1 L2082.9 607.9 L2081.2 604.7 L2079.5 601.5 L2077.7 598.3 L2075.9 595.2 L2074.1 592.1 L2072.3 589.0 L2070.4 585.9 L2068.5 582.8 L2066.6 579.7 L2064.6 576.7 L2062.7 573.7 L2060.7 570.7 L2058.7 567.7 L2056.6 564.7 L2054.5 561.8 L2052.4 558.9 L2050.3 556.0 L2048.2 553.1 L2046.0 550.2 L2043.8 547.4 L2041.6 544.5 L2039.3 541.7 L2037.0 538.9 L2034.8 536.2 L2032.4 533.4 L2030.1 530.7 L2027.7 528.0 L2025.3 525.3 L2022.9 522.7 L2020.5 520.0 L2018.1 517.4 L2015.6 514.8 L2013.1 512.2 L2010.6 509.7 L2008.0 507.2 L2005.5 504.7 L2002.9 502.2 L2000.3 499.7 L1997.6 497.3 L1995.0 494.9 L1992.3 492.5 L1989.6 490.2 L1986.9 487.9 L1984.2 485.6 L1981.4 483.3 L1978.6 481.0 L1975.9 478.8 L1973.0 476.6 L1970.2 474.4 L1967.4 472.3 L1964.5 470.2 L1961.6 468.1 L1958.7 466.0 L1955.8 464.0 L1952.9 461.9 L1949.9 459.9 L1947.0 458.0 L1944.0 456.0 L1941.0 454.1 L1938.0 452.2 L1935.0 450.4 L1931.9 448.5 L1928.9 446.7 L1925.8 445.0 L1922.7 443.2 L1919.6 441.5 L1916.5 439.8 L1913.4 438.1 L1910.2 436.5 L1907.1 434.9 L1903.9 433.3 L1900.7 431.7 L1897.5 430.2 L1894.3 428.7 L1891.1 427.2 L1887.9 425.8 L1884.6 424.4 L1881.4 423.0 L1878.1 421.7 L1874.9 420.3 L1871.6 419.0 L1868.3 417.8 L1865.0 416.5 L1861.7 415.3 L1858.4 414.1 L1855.1 412.9 L1851.7 411.8 L1848.4 410.6 L1845.0 409.5 L1841.7 408.5 L1838.3 407.5 L1835.0 406.5 L1831.6 405.5 L1828.2 404.5 L1824.8 403.6 L1821.4 402.7 L1818.0 401.9 L1814.6 401.1 L1811.2 400.3 L1807.7 399.5 L1804.3 398.8 L1800.9 398.1 L1797.4 397.4 L1794.0 396.8 L1790.5 396.2 L1787.1 395.6 L1783.6 395.0 L1780.1 394.5 L1776.7 394.0 L1773.2 393.6 L1769.7 393.1 L1766.3 392.7 L1762.8 392.4 L1759.3 392.0 L1755.8 391.7 L1752.3 391.4 L1748.9 391.2 L1745.4 391.0 L1741.9 390.8 L1738.4 390.6 L1734.9 390.5 L1731.4 390.4 L1727.9 390.4 L1724.4 390.3 L1721.0 390.3 L1717.5 390.4 L1714.0 390.4 L1710.5 390.5 L1707.0 390.6 L1703.5 390.8 L1700.1 391.0 L1696.6 391.2 L1693.1 391.5 L1689.7 391.8 L1686.2 392.1 L1682.7 392.4 L1679.3 392.8 L1675.8 393.2 L1672.4 393.7 L1668.9 394.1 L1665.5 394.6 L1662.1 395.1 L1658.7 395.7 L1655.2 396.3 L1651.8 396.9 L1648.4 397.5 L1645.0 398.2 L1641.6 398.9 L1638.2 399.7 L1634.9 400.4 L1631.5 401.2 L1628.1 402.0 L1624.8 402.9 L1621.4 403.8 L1618.1 404.7 L1614.8 405.6 L1611.5 406.6 L1608.2 407.6 L1604.9 408.6 L1601.6 409.6 L1598.3 410.7 L1595.0 411.8 L1591.8 413.0 L1588.5 414.1 L1585.3 415.3 L1582.1 416.5 L1578.9 417.8 L1575.7 419.1 L1572.5 420.4 L1569.3 421.7 L1566.2 423.1 L1563.0 424.4 L1559.9 425.9 L1556.8 427.3 L1553.7 428.8 L1550.6 430.3 L1547.5 431.8 L1544.5 433.4 L1541.4 435.0 L1538.4 436.6 L1535.4 438.3 L1532.4 439.9 L1529.4 441.6 L1526.4 443.3 L1523.5 445.1 L1520.6 446.8 L1517.6 448.6 L1514.8 450.5 L1511.9 452.3 L1509.0 454.2 L1506.2 456.0 L1503.3 458.0 L1500.5 459.9 L1497.7 461.9 L1495.0 463.9 L1492.2 465.9 L1489.5 467.9 L1486.7 469.9 L1484.0 472.0 L1481.4 474.1 L1478.7 476.3 L1476.1 478.4 L1473.4 480.6 L1470.8 482.8 L1468.3 485.0 L1465.7 487.2 L1463.2 489.5 L1460.6 491.7 L1458.2 494.0 L1455.7 496.4 L1453.2 498.7 L1450.8 501.1 L1448.4 503.4 L1446.0 505.8 L1443.6 508.3 L1441.3 510.7 L1438.9 513.2 L1436.6 515.6 Z" fill="#dce9dc"/>
<path d="M1221.4 789.5 L1221.6 793.8 L1221.8 798.0 L1222.1 802.3 L1222.4 806.5 L1222.7 810.8 L1223.1 815.0 L1223.5 819.3 L1223.9 823.5 L1224.4 827.8 L1224.9 832.0 L1225.5 836.2 L1226.0 840.4 L1226.7 844.6 L1227.3 848.8 L1228.0 853.0 L1228.8 857.2 L1229.5 861.4 L1230.3 865.5 L1231.2 869.7 L1232.1 873.9 L1233.0 878.0 L1233.9 882.1 L1234.9 886.3 L1235.9 890.4 L1237.0 894.5 L1238.1 898.6 L1239.2 902.6 L1240.4 906.7 L1241.6 910.8 L1242.8 914.8 L1244.1 918.8 L1245.4 922.9 L1246.7 926.9 L1248.1 930.9 L1249.5 934.8 L1251.0 938.8 L1252.4 942.8 L1254.0 946.7 L1255.5 950.6 L1257.1 954.5 L1258.7 958.4 L1260.3 962.3 L1262.0 966.2 L1263.7 970.0 L1265.5 973.8 L1267.2 977.7 L1269.0 981.4 L1270.9 985.2 L1272.8 989.0 L1274.7 992.7 L1276.6 996.5 L1278.6 1000.2 L1280.6 1003.9 L1282.6 1007.5 L1284.6 1011.2 L1286.7 1014.8 L1288.9 1018.4 L1291.0 1022.0 L1293.2 1025.6 L1295.4 1029.2 L1297.7 1032.7 L1299.9 1036.2 L1302.2 1039.7 L1304.6 1043.2 L1306.9 1046.6 L1309.3 1050.0 L1311.8 1053.4 L1314.2 1056.8 L1316.7 1060.2 L1319.2 1063.5 L1321.7 1066.8 L1324.3 1070.1 L1326.9 1073.4 L1329.5 1076.6 L1332.1 1079.8 L1334.8 1083.0 L1337.5 1086.2 L1340.3 1089.3 L1343.0 1092.4 L1345.8 1095.5 L1348.6 1098.6 L1351.4 1101.6 L1354.3 1104.7 L1357.2 1107.6 L1360.1 1110.6 L1363.0 1113.5 L1366.0 1116.5 L1368.9 1119.3 L1371.9 1122.2 L1375.0 1125.0 L1378.0 1127.8 L1381.1 1130.6 L1384.2 1133.4 L1387.3 1136.1 L1390.4 1138.8 L1393.5 1141.5 L1396.7 1144.2 L1399.9 1146.8 L1403.1 1149.4 L1406.4 1151.9 L1409.6 1154.5 L1412.9 1157.0 L1416.2 1159.5 L1419.5 1161.9 L1422.9 1164.3 L1426.2 1166.7 L1429.6 1169.1 L1433.0 1171.4 L1436.5 1173.7 L1439.9 1176.0 L1443.4 1178.2 L1446.8 1180.4 L1450.3 1182.6 L1453.8 1184.7 L1457.4 1186.8 L1460.9 1188.9 L1464.5 1191.0 L1468.1 1193.0 L1471.7 1195.0 L1475.3 1196.9 L1478.9 1198.8 L1482.6 1200.7 L1486.2 1202.6 L1489.9 1204.4 L1493.6 1206.2 L1497.3 1207.9 L1501.0 1209.7 L1504.8 1211.3 L1508.5 1213.0 L1512.3 1214.6 L1516.0 1216.2 L1519.8 1217.8 L1523.6 1219.3 L1527.4 1220.8 L1531.3 1222.2 L1535.1 1223.6 L1539.0 1224.9 L1542.9 1226.2 L1546.8 1227.5 L1550.7 1228.7 L1554.6 1229.9 L1558.5 1231.0 L1562.4 1232.1 L1566.3 1233.2 L1570.3 1234.3 L1574.2 1235.3 L1578.2 1236.2 L1582.1 1237.2 L1586.1 1238.1 L1590.1 1238.9 L1594.0 1239.8 L1598.0 1240.6 L1602.0 1241.3 L1606.0 1242.1 L1610.0 1242.8 L1614.0 1243.4 L1618.0 1244.0 L1622.0 1244.6 L1626.0 1245.2 L1630.1 1245.7 L1634.1 1246.2 L1638.1 1246.6 L1642.1 1247.0 L1646.1 1247.4 L1650.2 1247.7 L1654.2 1248.0 L1658.2 1248.3 L1662.3 1248.6 L1666.3 1248.7 L1670.3 1248.9 L1674.3 1249.0 L1678.4 1249.1 L1682.4 1249.2 L1686.4 1249.2 L1690.4 1249.2 L1694.4 1249.1 L1698.5 1249.1 L1702.5 1248.9 L1706.5 1248.8 L1710.5 1248.6 L1714.5 1248.3 L1718.5 1247.9 L1722.5 1247.5 L1726.5 1247.1 L1730.5 1246.6 L1734.4 1246.1 L1738.4 1245.6 L1742.4 1245.0 L1746.3 1244.4 L1750.2 1243.7 L1754.2 1243.1 L1758.1 1242.3 L1762.0 1241.6 L1765.9 1240.8 L1769.8 1240.0 L1773.7 1239.2 L1777.6 1238.3 L1781.4 1237.4 L1785.3 1236.4 L1789.1 1235.5 L1793.0 1234.4 L1796.8 1233.4 L1800.6 1232.3 L1804.4 1231.2 L1808.2 1230.1 L1811.9 1228.9 L1815.7 1227.7 L1819.4 1226.5 L1823.2 1225.2 L1826.9 1223.9 L1830.6 1222.5 L1834.3 1221.2 L1838.0 1219.8 L1841.6 1218.4 L1845.3 1216.9 L1848.9 1215.4 L1852.5 1213.9 L1856.1 1212.3 L1859.7 1210.7 L1863.2 1209.1 L1866.8 1207.5 L1870.3 1205.8 L1873.8 1204.1 L1877.3 1202.4 L1880.8 1200.6 L1884.2 1198.8 L1887.7 1197.0 L1891.1 1195.1 L1894.5 1193.2 L1897.8 1191.3 L1901.2 1189.3 L1904.5 1187.3 L1907.8 1185.3 L1911.1 1183.3 L1914.4 1181.2 L1917.6 1179.1 L1920.9 1177.0 L1924.1 1174.8 L1927.3 1172.6 L1930.4 1170.4 L1933.6 1168.2 L1936.7 1166.0 L1939.8 1163.7 L1942.9 1161.4 L1945.9 1159.0 L1949.0 1156.7 L1952.0 1154.3 L1954.9 1151.9 L1957.9 1149.5 L1960.8 1147.0 L1963.7 1144.5 L1966.6 1142.0 L1969.5 1139.5 L1972.3 1137.0 L1975.1 1134.4 L1977.9 1131.8 L1980.7 1129.2 L1983.4 1126.6 L1986.2 1123.9 L1988.8 1121.2 L1991.5 1118.5 L1994.1 1115.8 L1996.7 1113.0 L1999.3 1110.3 L2001.9 1107.5 L2004.4 1104.7 L2006.9 1101.9 L2009.4 1099.0 L2011.9 1096.2 L2014.3 1093.3 L2016.8 1090.5 L2019.4 1087.8 L2021.9 1085.0 L2024.4 1082.2 L2026.9 1079.4 L2029.4 1076.6 L2031.8 1073.7 L2034.2 1070.9 L2036.6 1068.0 L2038.9 1065.1 L2041.2 1062.1 L2043.5 1059.2 L2045.8 1056.2 L2048.0 1053.2 L2050.3 1050.2 L2052.5 1047.2 L2054.6 1044.1 L2056.8 1041.1 L2058.9 1038.0 L2061.0 1034.9 L2063.0 1031.8 L2065.0 1028.6 L2067.0 1025.5 L2069.0 1022.3 L2070.9 1019.1 L2072.9 1015.9 L2074.7 1012.7 L2076.6 1009.5 L2078.4 1006.2 L2080.2 1003.0 L2082.0 999.7 L2083.7 996.4 L2085.5 993.1 L2087.1 989.8 L2088.8 986.4 L2090.4 983.1 L2092.0 979.7 L2093.6 976.3 L2095.1 973.0 L2096.6 969.6 L2098.1 966.1 L2099.5 962.7 L2101.0 959.3 L2102.3 955.8 L2103.7 952.4 L2105.0 948.9 L2106.3 945.4 L2107.5 941.9 L2108.8 938.4 L2109.9 934.9 L2111.1 931.4 L2112.2 927.8 L2113.3 924.3 L2114.4 920.7 L2115.4 917.2 L2116.4 913.6 L2117.4 910.0 L2118.3 906.4 L2119.2 902.8 L2120.1 899.2 L2120.9 895.6 L2121.7 892.0 L2122.5 888.4 L2123.3 884.8 L2124.0 881.2 L2124.7 877.5 L2125.3 873.9 L2125.9 870.2 L2126.5 866.6 L2127.1 863.0 L2127.6 859.3 L2128.1 855.6 L2128.5 852.0 L2129.0 848.3 L2129.4 844.6 L2129.7 841.0 L2130.0 837.3 L2130.3 833.6 L2130.6 830.0 L2130.8 826.3 L2131.0 822.6 L2131.2 818.9 L2131.3 815.2 L2131.4 811.6 L2131.5 807.9 L2131.6 804.2 L2131.6 800.5 L2131.5 796.8 L2131.5 793.2 L2131.4 789.5 L2131.3 785.8 L2131.1 782.2 L2130.9 778.5 L2130.6 774.8 L2130.4 771.2 L2130.1 767.5 L2129.7 763.9 L2129.4 760.2 L2129.0 756.6 L2128.5 752.9 L2128.1 749.3 L2127.6 745.7 L2127.1 742.0 L2126.5 738.4 L2125.9 734.8 L2125.3 731.2 L2124.6 727.6 L2124.0 724.0 L2123.3 720.4 L2122.5 716.9 L2121.7 713.3 L2120.9 709.7 L2120.1 706.2 L2119.2 702.6 L2118.3 699.1 L2117.4 695.6 L2116.4 692.0 L2115.5 688.5 L2114.4 685.0 L2113.4 681.5 L2112.3 678.1 L2111.2 674.6 L2110.1 671.1 L2108.9 667.7 L2107.7 664.3 L2106.5 660.8 L2105.2 657.4 L2103.9 654.0 L2102.6 650.6 L2101.3 647.3 L2099.9 643.9 L2098.5 640.6 L2097.0 637.2 L2095.6 633.9 L2094.1 630.6 L2092.6 627.3 L2091.0 624.0 L2089.5 620.8 L2087.9 617.5 L2086.3 614.3 L2084.6 611.1 L2082.9 607.9 L2081.2 604.7 L2079.5 601.5 L2077.7 598.3 L2075.9 595.2 L2074.1 592.1 L2072.3 589.0 L2070.4 585.9 L2068.5 582.8 L2066.6 579.7 L2064.6 576.7 L2062.7 573.7 L2060.7 570.7 L2058.7 567.7 L2056.6 564.7 L2054.5 561.8 L2052.4 558.9 L2050.3 556.0 L2048.2 553.1 L2046.0 550.2 L2043.8 547.4 L2041.6 544.5 L2039.3 541.7 L2037.0 538.9 L2034.8 536.2 L2032.4 533.4 L2030.1 530.7 L2027.7 528.0 L2025.3 525.3 L2022.9 522.7 L2020.5 520.0 L2018.1 517.4 L2015.6 514.8 L2013.1 512.2 L2010.6 509.7 L2008.0 507.2 L2005.5 504.7 L2002.9 502.2 L2000.3 499.7 L1997.6 497.3 L1995.0 494.9 L1992.3 492.5 L1989.6 490.2 L1986.9 487.9 L1984.2 485.6 L1981.4 483.3 L1978.6 481.0 L1975.9 478.8 L1973.0 476.6 L1970.2 474.4 L1967.4 472.3 L1964.5 470.2 L1961.6 468.1 L1958.7 466.0 L1955.8 464.0 L1952.9 461.9 L1949.9 459.9 L1947.0 458.0 L1944.0 456.0 L1941.0 454.1 L1938.0 452.2 L1935.0 450.4 L1931.9 448.5 L1928.9 446.7 L1925.8 445.0 L1922.7 443.2 L1919.6 441.5 L1916.5 439.8 L1913.4 438.1 L1910.2 436.5 L1907.1 434.9 L1903.9 433.3 L1900.7 431.7 L1897.5 430.2 L1894.3 428.7 L1891.1 427.2 L1887.9 425.8 L1884.6 424.4 L1881.4 423.0 L1878.1 421.7 L1874.9 420.3 L1871.6 419.0 L1868.3 417.8 L1865.0 416.5 L1861.7 415.3 L1858.4 414.1 L1855.1 412.9 L1851.7 411.8 L1848.4 410.6 L1845.0 409.5 L1841.7 408.5 L1838.3 407.5 L1835.0 406.5 L1831.6 405.5 L1828.2 404.5 L1824.8 403.6 L1821.4 402.7 L1818.0 401.9 L1814.6 401.1 L1811.2 400.3 L1807.7 399.5 L1804.3 398.8 L1800.9 398.1 L1797.4 397.4 L1794.0 396.8 L1790.5 396.2 L1787.1 395.6 L1783.6 395.0 L1780.1 394.5 L1776.7 394.0 L1773.2 393.6 L1769.7 393.1 L1766.3 392.7 L1762.8 392.4 L1759.3 392.0 L1755.8 391.7 L1752.3 391.4 L1748.9 391.2 L1745.4 391.0 L1741.9 390.8 L1738.4 390.6 L1734.9 390.5 L1731.4 390.4 L1727.9 390.4 L1724.4 390.3 L1721.0 390.3 L1717.5 390.4 L1714.0 390.4 L1710.5 390.5 L1707.0 390.6 L1703.5 390.8 L1700.1 391.0 L1696.6 391.2 L1693.1 391.5 L1689.7 391.8 L1686.2 392.1 L1682.7 392.4 L1679.3 392.8 L1675.8 393.2 L1672.4 393.7 L1668.9 394.1 L1665.5 394.6 L1662.1 395.1 L1658.7 395.7 L1655.2 396.3 L1651.8 396.9 L1648.4 397.5 L1645.0 398.2 L1641.6 398.9 L1638.2 399.7 L1634.9 400.4 L1631.5 401.2 L1628.1 402.0 L1624.8 402.9 L1621.4 403.8 L1618.1 404.7 L1614.8 405.6 L1611.5 406.6 L1608.2 407.6 L1604.9 408.6 L1601.6 409.6 L1598.3 410.7 L1595.0 411.8 L1591.8 413.0 L1588.5 414.1 L1585.3 415.3 L1582.1 416.5 L1578.9 417.8 L1575.7 419.1 L1572.5 420.4 L1569.3 421.7 L1566.2 423.1 L1563.0 424.4 L1559.9 425.9 L1556.8 427.3 L1553.7 428.8 L1550.6 430.3 L1547.5 431.8 L1544.5 433.4 L1541.4 435.0 L1538.4 436.6 L1535.4 438.3 L1532.4 439.9 L1529.4 441.6 L1526.4 443.3 L1523.5 445.1 L1520.6 446.8 L1517.6 448.6 L1514.8 450.5 L1511.9 452.3 L1509.0 454.2 L1506.2 456.0 L1503.3 458.0 L1500.5 459.9 L1497.7 461.9 L1495.0 463.9 L1492.2 465.9 L1489.5 467.9 L1486.7 469.9 L1484.0 472.0 L1481.4 474.1 L1478.7 476.3 L1476.1 478.4 L1473.4 480.6 L1470.8 482.8 L1468.3 485.0 L1465.7 487.2 L1463.2 489.5 L1460.6 491.7 L1458.2 494.0 L1455.7 496.4 L1453.2 498.7 L1450.8 501.1 L1448.4 503.4 L1446.0 505.8 L1443.6 508.3 L1441.3 510.7 L1438.9 513.2 L1436.6 515.6" fill="none" stroke="#4a6f4a" stroke-width="1.25"/>
<path d="M1710.5 789.5 L1221.4 789.5 M1710.5 789.5 L1375.0 1125.0 M1710.5 789.5 L1710.5 1248.6 M1710.5 789.5 L2014.3 1093.3 M1710.5 789.5 L2131.4 789.5 M1710.5 789.5 L2000.3 499.7 M1710.5 789.5 L1710.5 390.5 M1710.5 789.5 L1436.6 515.6 " fill="none" stroke="#4a6f4a" stroke-width="1.25"/>
<path d="M1436.6 515.6 L1434.5 518.3 L1432.3 521.0 L1430.2 523.6 L1428.1 526.3 L1426.1 529.1 L1424.0 531.8 L1422.0 534.5 L1420.0 537.3 L1418.1 540.1 L1416.1 542.9 L1414.2 545.7 L1412.3 548.5 L1410.5 551.3 L1408.7 554.2 L1406.9 557.1 L1405.1 559.9 L1403.3 562.8 L1401.6 565.7 L1399.9 568.6 L1398.3 571.6 L1396.6 574.5 L1395.0 577.4 L1393.3 580.3 L1391.6 583.2 L1390.0 586.1 L1388.3 589.1 L1386.7 592.0 L1385.2 595.0 L1383.6 597.9 L1382.1 600.9 L1380.7 603.9 L1379.2 606.9 L1377.8 609.9 L1376.4 613.0 L1375.0 616.0 L1373.7 619.0 L1372.4 622.1 L1371.1 625.2 L1369.8 628.2 L1368.6 631.3 L1367.4 634.4 L1366.2 637.5 L1365.0 640.6 L1363.9 643.7 L1362.8 646.9 L1361.8 650.0" fill="none" stroke="#124a16" stroke-width="1.5"/>
<path d="M1710.5 789.5 L1352.7 656.5" stroke="#124a16" stroke-width="1.6"/>
<circle cx="1375.5" cy="1125.4" r="8" fill="url(#glow)"/>
<circle cx="1375.5" cy="1125.4" r="3.2" fill="#6ccc6c" stroke="#245e24" stroke-width="1.3"/>
<circle cx="1710.5" cy="789.5" r="1.6" fill="#163a16"/>
</svg>
<svg style="left:0;top:0" width="2246" height="1697" viewBox="0 0 2246 1697">
<defs>
<linearGradient id="gCur" x1="0" y1="0" x2="1" y2="1"><stop offset="0" stop-color="#e0e0e0"/><stop offset="1" stop-color="#707070"/></linearGradient>
<linearGradient id="gCur2" x1="0" y1="0" x2="1" y2="1"><stop offset="0" stop-color="#d8b070"/><stop offset="1" stop-color="#8a6030"/></linearGradient>
</defs>
<rect x="544.5" y="225.5" width="31" height="31" rx="6" fill="#fff" stroke="#606060" stroke-width="1.1"/>
<path d="M554 232.5 V249 L558 245.5 L561 252 L564 250.5 L561 244.5 L566 244 Z" fill="url(#gCur)" stroke="#222" stroke-width="1"/>
<rect x="545.5" y="288.5" width="47" height="47" rx="8" fill="#fff" stroke="#606060" stroke-width="1.1"/>
<path d="M554 321 V298" stroke="#4a7a4a" stroke-width="1.3"/>
<path d="M551 304 L554 295 L557 304 Z" fill="#c8c890" stroke="#4a6a4a" stroke-width="0.9"/>
<path d="M554 321 L566 312" stroke="#4a8a3a" stroke-width="1.5"/>
<path d="M563 317 L570.5 309 L566 310.5 L560.5 313 Z" fill="#a8d860" stroke="#4a7a2a" stroke-width="0.9"/>
<path d="M554 321 L578 330" stroke="#a04020" stroke-width="1.4"/>
<path d="M569 329 L585 331.5 L571 324 Z" fill="#f08050" stroke="#a04020" stroke-width="0.9"/>
<circle cx="554" cy="321" r="2.6" fill="#f0c040" stroke="#a08020" stroke-width="1"/>
<path d="M573 291.5 V306 L577 302.5 L580.5 309 L584 307.5 L580.5 301 L586 300.5 Z" fill="url(#gCur2)" stroke="#5a3a10" stroke-width="1.1"/>
<!-- triad bottom right -->
<rect x="2154.2" y="1257" width="4.2" height="45" fill="#7ac87a"/>
<path d="M2156.5 1228.5 L2161.7 1257.5 H2151 Z" fill="#009000"/>
<rect x="2111" y="1300.5" width="45" height="4.3" fill="#ff7a7a"/>
<path d="M2082 1302.5 L2111 1297.3 V1307.7 Z" fill="#f20000"/>
<circle cx="2156.5" cy="1302.8" r="4.6" fill="#7a7a7a" stroke="#5a7ae0" stroke-width="0.9"/>
<text x="2156.5" y="1218.7" font-family="Liberation Sans" font-weight="bold" font-size="16" fill="#70c070" text-anchor="middle">Y</text>
<text x="2066.5" y="1308.4" font-family="Liberation Sans" font-weight="bold" font-size="16" fill="#ff8484" text-anchor="middle">X</text>
<!-- gizmo bottom left -->
<ellipse cx="618" cy="1511" rx="5.2" ry="4" fill="#088808"/>
<ellipse cx="618" cy="1542.5" rx="5.2" ry="4" fill="#088808"/>
<ellipse cx="601.5" cy="1527" rx="4" ry="5.2" fill="#f00000"/>
<ellipse cx="634" cy="1527" rx="4" ry="5.2" fill="#f00000"/>
<rect x="601.5" y="1510.8" width="32.5" height="32" fill="#e8fcfc" stroke="#c0c8dc" stroke-width="1"/>
<circle cx="618" cy="1526.7" r="6.6" fill="#0000f0"/>
<rect x="616" y="1493.5" width="4" height="8.5" fill="#089008"/>
<path d="M618 1479.6 L623 1494 H613 Z" fill="#089008"/>
<rect x="584.5" y="1525" width="8.5" height="3.7" fill="#f00000"/>
<path d="M570.3 1527 L584.5 1522 V1531.6 Z" fill="#f00000"/>
<text x="618" y="1475.3" font-family="Liberation Sans" font-weight="bold" font-size="15.5" fill="#088808" text-anchor="middle">Y</text>
<text x="561" y="1532.6" font-family="Liberation Sans" font-weight="bold" font-size="15.5" fill="#f00000" text-anchor="middle">X</text>
</svg>

<!-- doc tab strip -->
<div class="a" style="left:522px;top:1618px;width:1724px;height:38px;background:#f7f7fb"></div>
<div class="a" style="left:527px;top:1618px;width:1719px;height:1px;background:#6e6e6e"></div>
<div class="a" style="left:527px;top:1618px;width:1px;height:38px;background:#6e6e6e"></div>
<div class="a" style="left:531px;top:1619px;width:186px;height:30px;background:#f7f7fb;border-left:1px solid #2d5b87;border-right:1px solid #2d5b87;border-bottom:2px solid #2d5b87"></div>
<svg style="left:0;top:0" width="760" height="1697" viewBox="0 0 760 1697">
<path d="M537 1622.5 H548 L552.5 1627 V1644.5 H537 Z" fill="#f2f2ee" stroke="#7080b0" stroke-width="1"/>
<path d="M548 1622.5 V1627 H552.5" fill="none" stroke="#7080b0" stroke-width="1"/>
<path d="M538.5 1637 L547.5 1632.5 L558.5 1636 V1640.5 L549 1645 L538.5 1641 Z" fill="#e8b488" stroke="#906040" stroke-width="1"/>
<path d="M538.5 1637 L549 1640.5 L558.5 1636" fill="none" stroke="#906040" stroke-width="0.9"/>
<path d="M540 1637 L547.5 1633.5 L556.5 1636 L549 1639.5 Z" fill="#fad8b4"/>
<path d="M699.5 1630 L709 1638.8 M709 1630 L699.5 1638.8" stroke="#6a6a6a" stroke-width="2.4"/>
</svg>
<div class="t" style="left:568px;top:1626px;font-size:17px;font-weight:bold;color:#2d5b87">asm0001_asm*</div>


<!-- ===== STATUS BAR ===== -->
<div class="a" style="left:0;top:1656px;width:2246px;height:41px;background:#2d5b87"></div>
<div class="t" style="left:10px;top:1673px;font-size:16px;color:#fff">单击平面、原点、轴或线以将作为测量方向参考。</div>
<div class="a" style="left:1490px;top:1662px;width:1px;height:35px;background:#8ea4bc"></div>
<div class="a" style="left:1848px;top:1662px;width:1px;height:35px;background:#8ea4bc"></div>
<div class="a" style="left:1902px;top:1662px;width:1px;height:35px;background:#8ea4bc"></div>
<div class="a" style="left:2131px;top:1662px;width:1px;height:35px;background:#8ea4bc"></div>
<div class="t" style="left:1499px;top:1673px;font-size:16.3px;color:#fff">x = 731.47 mm, y = 166.54 mm, z = -97.18 mm</div>
<svg style="left:0;top:0" width="2246" height="1697" viewBox="0 0 2246 1697">
<path d="M1867 1673 L1876.5 1688.5 H1857.5 Z" fill="#f2e88a" stroke="#b8a840" stroke-width="1.5" stroke-linejoin="round"/>
<path d="M1885 1684 L1890.7 1677.8 L1896.4 1684 Z" fill="#fff"/>
</svg>


<svg style="left:0;top:0;z-index:50" width="2246" height="1697" viewBox="0 0 2246 1697"><path d="M373.1 214.6 L202.6 125.6 L208.4 123.0 L188.5 123.7 L199.9 140.0 L198.5 133.8 L372.3 216.2 Z" fill="#ff1c12"/><path d="M489.1 227.9 L490.9 49.3 L495.9 53.2 L486.2 35.8 L476.9 53.4 L481.7 49.3 L487.3 227.9 Z" fill="#ff1c12"/><path d="M159.2 1007.9 L53.7 903.5 L60.0 902.7 L40.7 897.6 L46.9 916.5 L47.4 910.2 L158.0 1009.3 Z" fill="#ff1c12"/><path d="M1385.3 1322.5 L1378.0 1155.8 L1383.1 1159.4 L1372.5 1142.6 L1364.2 1160.7 L1368.8 1156.4 L1383.5 1322.7 Z" fill="#ff1c12"/><path d="M1426.1 1527.3 L1507.3 1655.4 L1501.0 1654.8 L1518.6 1664.1 L1516.8 1644.3 L1514.9 1650.3 L1427.5 1526.3 Z" fill="#ff1c12"/></svg>

</body></html>
